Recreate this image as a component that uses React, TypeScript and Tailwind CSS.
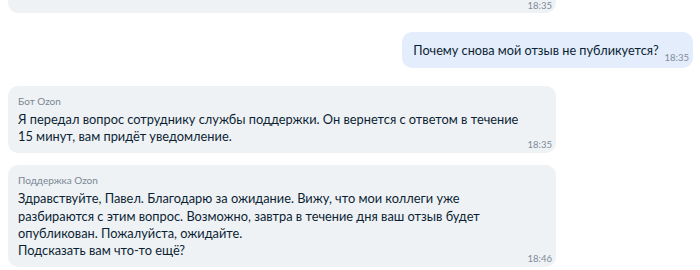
type Msg = {
  from?: string;
  lines: string[];
  time: string;
};

const incoming: Msg[] = [
  {
    from: "Бот Ozon",
    lines: [
      "Я передал вопрос сотруднику службы поддержки. Он вернется с ответом в течение",
      "15 минут, вам придёт уведомление.",
    ],
    time: "18:35",
  },
  {
    from: "Поддержка Ozon",
    lines: [
      "Здравствуйте, Павел. Благодарю за ожидание. Вижу, что мои коллеги уже",
      "разбираются с этим вопрос. Возможно, завтра в течение дня ваш отзыв будет",
      "опубликован. Пожалуйста, ожидайте.",
      "Подсказать вам что-то ещё?",
    ],
    time: "18:46",
  },
];

function Incoming({ msg, className }: { msg: Msg; className?: string }) {
  return (
    <div className={"w-[548px] rounded-[10px] bg-[#eff2f5] px-2.5 pt-2 pb-[2px] " + (className ?? "")}>
      {msg.from && (
        <div className="text-[10px] leading-[14px] text-[#7a8794]">{msg.from}</div>
      )}
      <div className="mt-[3px] text-[12.8px] leading-[17.2px] text-[#0b1f33]">
        {msg.lines.map((line, i) => (
          <p key={i} className="whitespace-nowrap">{line}</p>
        ))}
      </div>
      <div className="-mt-[6px] -mr-1.5 text-right text-[9.5px] leading-3 text-[#7e8b98]">{msg.time}</div>
    </div>
  );
}

export default function App() {
  return (
    <div className="h-[270px] overflow-hidden bg-white pl-2 pr-[7px] font-['Lato',sans-serif]">
      <div className="flex flex-col">
        <div className="-mt-[21px] w-[548px] rounded-[10px] bg-[#eff2f5] px-2.5 pt-2 pb-px">
          <div className="-mt-[3px] mb-[3px] text-[12.8px] leading-[17px] text-[#0b1f33]">
            уточнить у коллег, ожидайте.
          </div>
          <div className="-mt-[4px] -mr-1.5 text-right text-[9.5px] leading-3 text-[#7e8b98]">18:35</div>
        </div>

        <div className="mt-[19px] flex self-end rounded-[10px] bg-[#e4edfb] pt-[10px] pr-1 pb-[4px] pl-[11px]">
          <span className="mb-[5px] text-[12.7px] leading-[17px] text-[#0b1f33]">
            Почему снова мой отзыв не публикуется?
          </span>
          <span className="ml-1.5 self-end text-[9.5px] leading-3 text-[#7e8b98]">18:35</span>
        </div>

        <Incoming msg={incoming[0]} className="mt-[18px]" />
        <Incoming msg={incoming[1]} className="mt-3" />
      </div>
    </div>
  );
}
